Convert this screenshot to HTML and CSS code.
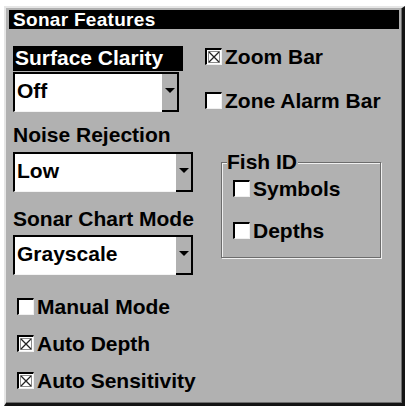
FILE: index.html
```html
<!DOCTYPE html>
<html>
<head>
<meta charset="utf-8">
<link rel="stylesheet" href="styles.css">
</head>
<body>
<div class="window">
  <div class="titlebar">Sonar Features</div>
  <div class="content">
    <div class="col-left">
      <div class="label label-active">Surface Clarity</div>
      <div class="select select-narrow">
        <span class="select-value">Off</span>
        <span class="select-btn"><span class="arrow"></span></span>
      </div>
      <div class="label label-noise">Noise Rejection</div>
      <div class="select select-low">
        <span class="select-value">Low</span>
        <span class="select-btn"><span class="arrow"></span></span>
      </div>
      <div class="label label-chart">Sonar Chart Mode</div>
      <div class="select select-gray">
        <span class="select-value">Grayscale</span>
        <span class="select-btn"><span class="arrow"></span></span>
      </div>
      <div class="checks-left">
        <div class="check"><span class="box"></span><span class="check-text">Manual Mode</span></div>
        <div class="check"><span class="box"><svg class="xmark" width="14" height="14" viewBox="0 0 14 14"><rect x="1.5" y="1.5" width="11" height="11" fill="none" stroke="#8a8a8a" stroke-width="1"/><path d="M2 2 L12 12 M12 2 L2 12" stroke="#222" stroke-width="1.3" fill="none"/></svg></span><span class="check-text">Auto Depth</span></div>
        <div class="check"><span class="box"><svg class="xmark" width="14" height="14" viewBox="0 0 14 14"><rect x="1.5" y="1.5" width="11" height="11" fill="none" stroke="#8a8a8a" stroke-width="1"/><path d="M2 2 L12 12 M12 2 L2 12" stroke="#222" stroke-width="1.3" fill="none"/></svg></span><span class="check-text">Auto Sensitivity</span></div>
      </div>
    </div>
    <div class="col-right">
      <div class="check check-zoom"><span class="box"><svg class="xmark" width="14" height="14" viewBox="0 0 14 14"><rect x="1.5" y="1.5" width="11" height="11" fill="none" stroke="#8a8a8a" stroke-width="1"/><path d="M2 2 L12 12 M12 2 L2 12" stroke="#222" stroke-width="1.3" fill="none"/></svg></span><span class="check-text">Zoom Bar</span></div>
      <div class="check check-zone"><span class="box"></span><span class="check-text">Zone Alarm Bar</span></div>
      <fieldset class="group">
        <legend class="group-title">Fish ID</legend>
        <div class="check check-symbols"><span class="box"></span><span class="check-text">Symbols</span></div>
        <div class="check check-depths"><span class="box"></span><span class="check-text">Depths</span></div>
      </fieldset>
    </div>
  </div>
</div>
</body>
</html>
```

FILE: styles.css
```css
html, body {
  margin: 0;
  padding: 0;
  background: #ffffff;
}

body {
  font-family: "Liberation Sans", Arial, sans-serif;
  font-weight: bold;
  color: #000;
}

.window {
  box-sizing: border-box;
  margin: 6px 0 0 4px;
  width: 401px;
  height: 400px;
  background: #b1b1b1;
  border-top: 2px solid #e6e6e6;
  border-left: 2px solid #e6e6e6;
  border-right: 3px solid #141414;
  border-bottom: 3px solid #141414;
  box-shadow: inset -1px -1px 0 #6e6e6e;
  padding: 2px 3px 0 3px;
}

.titlebar {
  height: 19px;
  background: #000;
  color: #fff;
  font-size: 19px;
  line-height: 19px;
  letter-spacing: 0.3px;
  padding-left: 4px;
}

.content {
  display: grid;
  grid-template-columns: 180px 1fr;
  column-gap: 12px;
  padding-left: 4px;
}

.col-left,
.col-right {
  display: flex;
  flex-direction: column;
  align-items: flex-start;
}

.label {
  font-size: 21px;
  line-height: 20px;
  white-space: nowrap;
}

.label-active {
  margin-top: 17px;
  box-sizing: border-box;
  width: 170px;
  height: 25px;
  line-height: 24px;
  background: #000;
  color: #fff;
  padding-left: 2px;
}

.label-noise {
  margin-top: 13px;
}

.label-chart {
  margin-top: 17px;
}

.select {
  box-sizing: border-box;
  display: flex;
  width: 180px;
  height: 40px;
  background: #fff;
  border-top: 2px solid #000;
  border-left: 2px solid #000;
  border-bottom: 1px solid #f4f4f4;
}

.select-narrow {
  width: 166px;
  margin-top: 1px;
}

.select-low {
  margin-top: 7px;
}

.select-gray {
  margin-top: 6px;
}

.select-value {
  flex: 1;
  font-size: 21px;
  line-height: 22px;
  padding: 6px 0 0 2px;
}

.select-btn {
  box-sizing: border-box;
  width: 17px;
  background: #b1b1b1;
  border-right: 2px solid #000;
  border-bottom: 2px solid #000;
  margin-bottom: -1px;
  display: flex;
  justify-content: center;
  padding-top: 14px;
}

.arrow {
  width: 0;
  height: 0;
  border-left: 5px solid transparent;
  border-right: 5px solid transparent;
  border-top: 5px solid #000;
}

.checks-left {
  margin-top: 23px;
  padding-left: 4px;
  display: flex;
  flex-direction: column;
  gap: 20px;
}

.check {
  display: flex;
  align-items: center;
  gap: 3px;
}

.box {
  box-sizing: border-box;
  width: 17px;
  height: 17px;
  background: #fff;
  border-top: 2px solid #000;
  border-left: 2px solid #000;
  border-right: 1px solid #f0f0f0;
  border-bottom: 1px solid #f0f0f0;
  display: flex;
}

.xmark {
  display: block;
}

.check-text {
  font-size: 21px;
  line-height: 17px;
  white-space: nowrap;
}

.check-zoom {
  margin-top: 19px;
}

.check-zone {
  margin-top: 27px;
}

.group {
  box-sizing: border-box;
  margin: 43px 0 0 16px;
  width: 160px;
  padding: 0 0 18px 5px;
  border: 1px solid #6c6c6c;
  box-shadow: inset 1px 1px 0 #f0f0f0, 1px 1px 0 #f0f0f0;
  min-width: 0;
}

.group-title {
  padding: 0 1px 0 0;
  margin: 0;
  font-size: 21px;
  line-height: 20px;
  background: #b1b1b1;
}

.check-symbols {
  margin: 8px 0 0 6px;
}

.check-depths {
  margin: 25px 0 0 6px;
}
```
